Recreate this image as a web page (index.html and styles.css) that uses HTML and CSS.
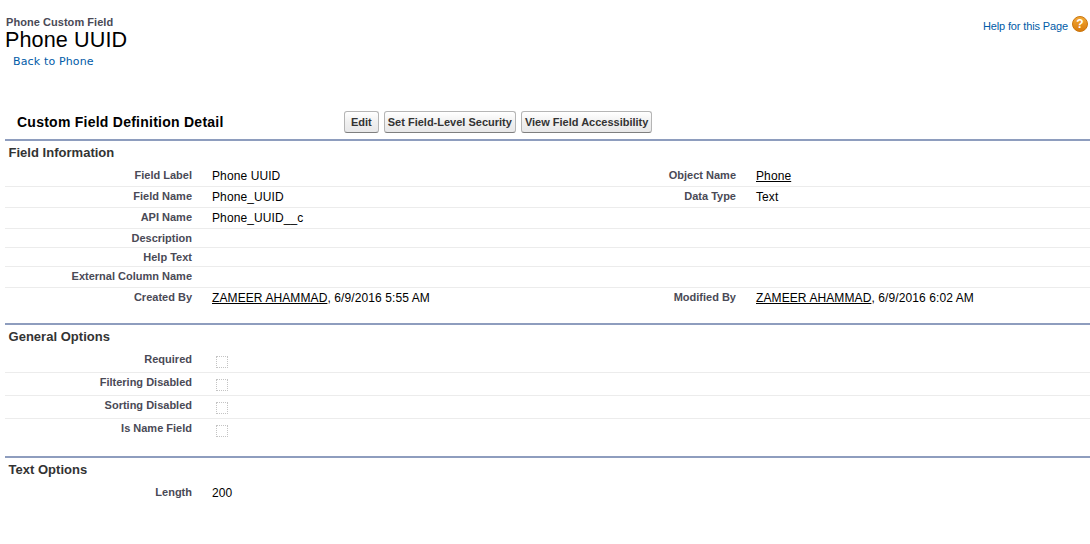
FILE: index.html
```html
<!DOCTYPE html>
<html lang="en">
<head>
<meta charset="utf-8">
<title>Phone UUID</title>
<link rel="stylesheet" href="styles.css">
</head>
<body>
<div class="page">
  <header class="page-head">
    <div class="head-text">
      <div class="kicker">Phone Custom Field</div>
      <h1 class="title">Phone UUID</h1>
      <a class="back" href="#">Back to Phone</a>
    </div>
    <div class="help">
      <a class="help-link" href="#">Help for this Page</a>
      <svg class="help-icon" width="16" height="16" viewBox="0 0 16 16" aria-hidden="true">
        <defs>
          <linearGradient id="helpfill" x1="0" y1="0" x2="0" y2="1">
            <stop offset="0" stop-color="#f3ab3a"/>
            <stop offset="1" stop-color="#d97a0a"/>
          </linearGradient>
        </defs>
        <circle cx="8" cy="8" r="7.5" fill="url(#helpfill)" stroke="#c9760f" stroke-width="1"/>
        <text x="8" y="12" text-anchor="middle" class="help-mark">?</text>
      </svg>
    </div>
  </header>

  <div class="detail-bar">
    <h2 class="detail-title">Custom Field Definition Detail</h2>
    <div class="buttons">
      <button class="btn btn-short" type="button">Edit</button>
      <button class="btn" type="button">Set Field-Level Security</button>
      <button class="btn" type="button">View Field Accessibility</button>
    </div>
  </div>

  <section class="section sec-info">
    <h3 class="sec-title">Field Information</h3>
    <div class="row"><div class="lab">Field Label</div><div class="val">Phone UUID</div><div class="lab">Object Name</div><div class="val"><a class="ul" href="#">Phone</a></div></div>
    <div class="row"><div class="lab">Field Name</div><div class="val">Phone_UUID</div><div class="lab">Data Type</div><div class="val">Text</div></div>
    <div class="row"><div class="lab">API Name</div><div class="val">Phone_UUID__c</div><div class="lab"></div><div class="val"></div></div>
    <div class="row short"><div class="lab">Description</div><div class="val"></div><div class="lab"></div><div class="val"></div></div>
    <div class="row short"><div class="lab">Help Text</div><div class="val"></div><div class="lab"></div><div class="val"></div></div>
    <div class="row"><div class="lab">External Column Name</div><div class="val"></div><div class="lab"></div><div class="val"></div></div>
    <div class="row last"><div class="lab">Created By</div><div class="val"><a class="ul" href="#">ZAMEER AHAMMAD</a>, 6/9/2016 5:55 AM</div><div class="lab">Modified By</div><div class="val"><a class="ul" href="#">ZAMEER AHAMMAD</a>, 6/9/2016 6:02 AM</div></div>
  </section>

  <section class="section sec-general">
    <h3 class="sec-title">General Options</h3>
    <div class="row check"><div class="lab">Required</div><div class="val"><span class="box"></span></div></div>
    <div class="row check"><div class="lab">Filtering Disabled</div><div class="val"><span class="box"></span></div></div>
    <div class="row check"><div class="lab">Sorting Disabled</div><div class="val"><span class="box"></span></div></div>
    <div class="row check last"><div class="lab">Is Name Field</div><div class="val"><span class="box"></span></div></div>
  </section>

  <section class="section">
    <h3 class="sec-title">Text Options</h3>
    <div class="row last"><div class="lab">Length</div><div class="val">200</div></div>
  </section>
</div>
</body>
</html>
```
FILE: styles.css
```css
html, body {
  margin: 0;
  padding: 0;
  background: #fff;
}
body {
  font-family: "Liberation Sans", Arial, sans-serif;
  font-size: 12px;
  color: #000;
  overflow: hidden;
}
.page {
  padding-left: 5px;
  height: 544px;
  box-sizing: border-box;
}
.page-head {
  display: flex;
  justify-content: space-between;
  height: 111px;
  box-sizing: border-box;
  padding-top: 15px;
}
.head-text {
  padding-left: 1px;
}
.kicker {
  font-size: 11px;
  font-weight: bold;
  line-height: 14px;
  letter-spacing: 0.05px;
  color: #4a4a56;
}
.title {
  margin: 0 0 0 -1px;
  font-size: 21.6px;
  font-weight: normal;
  line-height: 22px;
  letter-spacing: 0.1px;
  color: #000;
}
.back {
  display: block;
  margin: 4px 0 0 7px;
  font-family: "DejaVu Sans", Verdana, sans-serif;
  font-size: 11px;
  line-height: 14px;
  letter-spacing: 0.15px;
  color: #015ba7;
  text-decoration: none;
}
.help {
  display: flex;
  align-items: flex-start;
  gap: 4px;
  padding: 1px 2px 0 0;
}
.help-link {
  font-size: 11px;
  line-height: 20px;
  letter-spacing: -0.13px;
  color: #015ba7;
  text-decoration: none;
}
.help-icon {
  display: block;
}
.help-mark {
  font-family: "Liberation Sans", Arial, sans-serif;
  font-size: 12px;
  font-weight: bold;
  fill: #fff;
}
.detail-bar {
  display: flex;
  align-items: center;
  height: 22px;
  padding-bottom: 6px;
}
.detail-title {
  width: 339px;
  margin: 0;
  padding-left: 12px;
  box-sizing: border-box;
  font-size: 14px;
  font-weight: bold;
  letter-spacing: 0.25px;
  color: #000;
}
.buttons {
  display: flex;
  gap: 5px;
}
.btn {
  height: 22px;
  margin: 0;
  padding: 0 3px;
  border: 1px solid #b5b5b5;
  border-bottom-color: #7f7f7f;
  border-radius: 3px;
  background: linear-gradient(#fff, #f0f0f0 50%, #e8e8e9);
  font-family: "Liberation Sans", Arial, sans-serif;
  font-size: 11px;
  font-weight: bold;
  color: #333;
}
.btn-short {
  padding: 0 6px;
}
.section {
  border-top: 2px solid #8e9dbe;
}
.sec-info {
  height: 182px;
}
.sec-general {
  height: 131px;
}
.sec-title {
  margin: 0;
  padding: 0 0 1px 3.5px;
  font-size: 13px;
  font-weight: bold;
  line-height: 24px;
  letter-spacing: 0.02px;
  color: #333;
}
.row {
  display: grid;
  grid-template-columns: 187px 337px 167px 1fr;
  column-gap: 20px;
  height: 21px;
  box-sizing: border-box;
  border-bottom: 1px solid #ececec;
  line-height: 20px;
}
.row.short {
  height: 19px;
  line-height: 18px;
}
.row.check {
  height: 23px;
  grid-template-columns: 187px 1fr;
}
.row.last {
  border-bottom: 0;
}
.lab {
  text-align: right;
  font-size: 11px;
  font-weight: bold;
  line-height: 18px;
  color: #4a4a56;
}
.val {
  letter-spacing: 0.1px;
  color: #000;
}
.ul {
  color: #000;
  text-decoration: underline;
}
.box {
  display: block;
  width: 12px;
  height: 12px;
  margin: 6px 0 0 4px;
  box-sizing: border-box;
  border: 1px dotted #c4c4c4;
}
```
